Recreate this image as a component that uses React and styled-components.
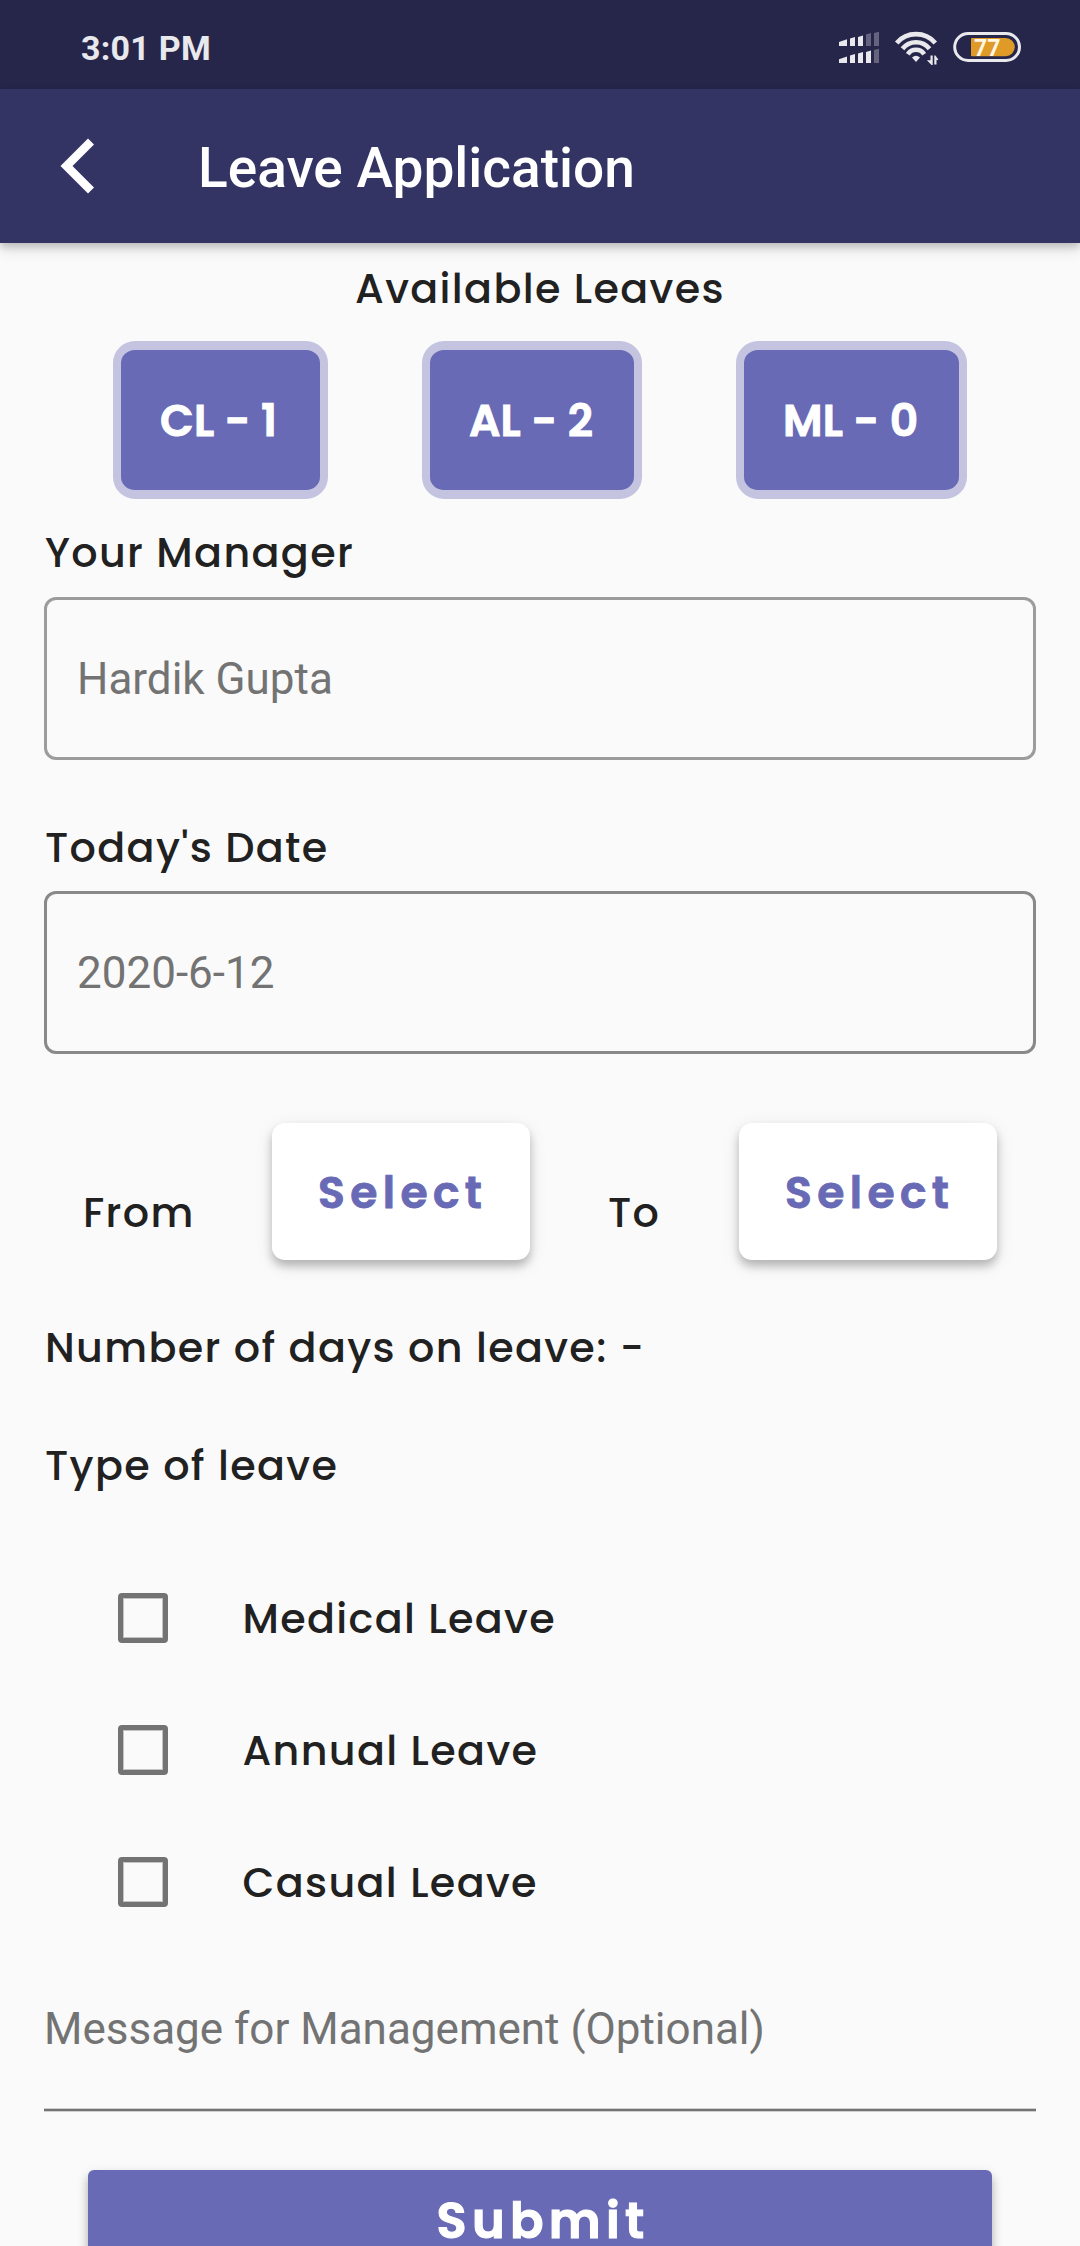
import React, { useState } from "react";
import styled, { createGlobalStyle } from "styled-components";

const GlobalStyle = createGlobalStyle`
  * { box-sizing: border-box; }
  html, body { margin: 0; background: #fafafa; }
`;

const heading = `"Poppins", "Inter", "Open Sans", sans-serif`;
const body = `"Roboto", "Noto Sans", sans-serif`;

const Screen = styled.div`
  width: 1080px;
  height: 2246px;
  overflow: hidden;
  display: flex;
  flex-direction: column;
  background: #fafafa;
  color: #212121;
  font-family: ${body};
`;

const StatusBar = styled.header`
  flex: none;
  height: 89px;
  padding: 7px 59px 0 81px;
  display: flex;
  align-items: center;
  justify-content: space-between;
  background: #26264b;
`;

const Clock = styled.span`
  font-size: 34px;
  font-weight: 700;
  line-height: 40px;
  letter-spacing: 0.25px;
  color: #e9e9ed;
`;

const StatusIcons = styled.svg`
  width: 183px;
  height: 40px;
  display: block;
`;

const AppBar = styled.nav`
  flex: none;
  height: 154px;
  display: flex;
  align-items: center;
  background: #333364;
  box-shadow: 0 3px 8px rgba(0, 0, 0, 0.19), 0 8px 12px rgba(0, 0, 0, 0.1);
  z-index: 1;
`;

const BackButton = styled.button`
  width: 198px;
  height: 154px;
  padding: 0 0 0 60px;
  border: 0;
  background: none;
  display: flex;
  align-items: center;

  svg { display: block; }
`;

const AppTitle = styled.h1`
  margin: 0;
  padding-top: 4px;
  font-size: 55px;
  font-weight: 500;
  line-height: 66px;
  color: #fff;
`;

const Content = styled.main`
  flex: 1;
  min-height: 0;
  padding: 16px 44px 0;
  display: flex;
  flex-direction: column;
`;

const Label = styled.div`
  flex: none;
  font-family: ${heading};
  font-size: 41.25px;
  font-weight: 500;
  line-height: 60px;
  letter-spacing: 1.35px;
  white-space: pre;
`;

const CenterLabel = styled(Label)`
  text-align: center;
`;

const BlockLabel = styled(Label)`
  margin-top: ${(p) => p.$gap}px;
  padding-left: 1px;
`;

const OptionLabel = styled(Label)`
  padding-top: 2px;
`;

const ChipRow = styled.div`
  flex: none;
  margin-top: 22px;
  padding: 0 69px;
  display: flex;
  justify-content: space-between;
`;

const Chip = styled.div`
  width: ${(p) => p.$width}px;
  height: 158px;
  padding-left: 39px;
  display: flex;
  align-items: center;
  border: solid #c4c4e1;
  border-width: 9px 8px;
  border-radius: 22px;
  background: #696ab5;
  color: #fff;
  font-family: ${heading};
  font-size: 44px;
  font-weight: 600;
  letter-spacing: 0.1px;
  -webkit-text-stroke: 0.9px currentColor;
  white-space: pre;
`;

const Field = styled.div`
  flex: none;
  height: 163px;
  margin-top: ${(p) => p.$gap}px;
  padding-left: 30px;
  display: flex;
  align-items: center;
  border: 3px solid ${(p) => p.$line};
  border-radius: 12px;
  color: #737373;
  font-size: 44px;
  line-height: 60px;
`;

const DateRow = styled.div`
  flex: none;
  margin-top: 69px;
  padding: 0 39px;
  display: flex;
  justify-content: space-between;
`;

const DatePicker = styled.div`
  display: flex;
`;

const DateLabel = styled(Label)`
  width: ${(p) => p.$width}px;
  margin-top: 60px;
`;

const SelectButton = styled.button`
  width: 258px;
  height: 137px;
  padding: 2px 0 0 46px;
  border: 0;
  border-radius: 13px;
  background: #fff;
  box-shadow: 0 6px 9px rgba(0, 0, 0, 0.22), 0 5px 18px rgba(0, 0, 0, 0.1);
  color: #696ab5;
  font-family: ${heading};
  font-size: 44px;
  font-weight: 600;
  letter-spacing: 5.4px;
  -webkit-text-stroke: 0.9px currentColor;
  text-align: left;
`;

const Options = styled.div`
  flex: none;
  margin-top: 56px;
`;

const Option = styled.label`
  height: 132px;
  padding-left: 74px;
  display: flex;
  align-items: center;
  gap: 74.5px;
`;

const Checkbox = styled.input.attrs({ type: "checkbox" })`
  appearance: none;
  width: 50px;
  height: 50px;
  margin: 0;
  border: 5px solid #737373;
  box-shadow: inset 0 0 0 1px #c4c4c4;
  border-radius: 4px;

  &:checked { background: #696ab5; border-color: #696ab5; }
`;

const Message = styled.div`
  flex: none;
  height: 163px;
  padding-top: 51px;
  border-bottom: 2px solid #737373;
  box-shadow: 0 1px 0 #cfcfcf, inset 0 -1px 0 #cfcfcf;
  color: #737373;
  font-size: 44px;
  line-height: 60px;
`;

const SubmitButton = styled.button`
  flex: none;
  height: 137px;
  margin: 59px 44px 0;
  padding: 21px 0 0 6px;
  border: 0;
  border-radius: 6px;
  background: #696ab5;
  box-shadow: 0 6px 9px rgba(0, 0, 0, 0.22), 0 5px 14px rgba(0, 0, 0, 0.12);
  color: #fff;
  display: flex;
  justify-content: center;
  align-items: flex-start;
  font-family: ${heading};
  font-size: 49.5px;
  font-weight: 600;
  line-height: 60px;
  letter-spacing: 5.3px;
  -webkit-text-stroke: 1.1px currentColor;
`;

function SystemIcons() {
  return (
    <StatusIcons viewBox="838 28 183 40" fill="#e9e9ed">
      <path d="M839 42l8-2.8V46h-8zM850 38.5l5-1.5v9h-5zM858 37l5-1.5V46h-5z" />
      <path d="M866 34.5l5-1.5v13h-5zM874 33l5-1.2V46h-5z" opacity=".32" />
      <path d="M839 59.3l8-2.8V63h-8zM850 55.5l5-1.5v9h-5zM858 53.5l5-1.5v11h-5zM866 52l5-1.5V63h-5z" />
      <path d="M874 50l5-1.2V63h-5z" opacity=".32" />
      <g fill="none" stroke="#e9e9ed" strokeWidth="4.6">
        <path d="M896.700 43a25.500 25.500 0 0 1 38.600 0" />
        <path d="M902.500 48.800a17.300 17.300 0 0 1 27 0" />
        <path d="M907.800 54.200a9.800 9.800 0 0 1 16.400 0" />
      </g>
      <path d="M912 57.400q4-3.400 8 0l-4 4.600z" />
      <path d="M930.5 55.5h2.2v9.5h-1.200l-4.600-4.800h3.600zM934.300 55.500h1.200l3 4.400h-2v4.600h-2.200z" />
      <rect x="954.7" y="33.5" width="64.8" height="27" rx="13.5" fill="none" stroke="#e9e9ed" strokeWidth="3" />
      <path d="M972 38h33.700a9.100 9.100 0 0 1 0 18.200H972q-1 0-1-1V39q0-1 1-1z" fill="#df9a28" />
      <text x="974" y="55.500" fontFamily="Roboto, sans-serif" fontSize="23" fontWeight="700" fill="#fff6e4">77</text>
    </StatusIcons>
  );
}

const leaves = [
  { text: "CL - 1", width: 215 },
  { text: "AL - 2", width: 220 },
  { text: "ML - 0", width: 231 },
];

const leaveTypes = ["Medical Leave", "Annual Leave", "Casual Leave"];

export default function App() {
  const [checked, setChecked] = useState({});
  const toggle = (name) => setChecked((c) => ({ ...c, [name]: !c[name] }));

  return (
    <Screen>
      <GlobalStyle />
      <StatusBar>
        <Clock>3:01 PM</Clock>
        <SystemIcons />
      </StatusBar>
      <AppBar>
        <BackButton aria-label="Back">
          <svg width="35" height="56" viewBox="0 0 35 56" fill="#fff">
            <path d="M28 0.500L34 6.500L12.500 28L34 49.500L28 55.500L0.500 28z" />
          </svg>
        </BackButton>
        <AppTitle>Leave Application</AppTitle>
      </AppBar>
      <Content>
        <CenterLabel>Available Leaves</CenterLabel>
        <ChipRow>
          {leaves.map((l) => (
            <Chip key={l.text} $width={l.width}>{l.text}</Chip>
          ))}
        </ChipRow>

        <BlockLabel $gap={24}>Your Manager</BlockLabel>
        <Field $gap={14} $line="#9c9c9c">Hardik Gupta</Field>

        <BlockLabel $gap={58}>Today's Date</BlockLabel>
        <Field $gap={13} $line="#898989">2020-6-12</Field>

        <DateRow>
          <DatePicker>
            <DateLabel $width={189}>From</DateLabel>
            <SelectButton>Select</SelectButton>
          </DatePicker>
          <DatePicker>
            <DateLabel $width={131}>To</DateLabel>
            <SelectButton>Select</SelectButton>
          </DatePicker>
        </DateRow>

        <BlockLabel $gap={58}>Number of days on leave: -</BlockLabel>
        <BlockLabel $gap={58}>Type of leave</BlockLabel>

        <Options>
          {leaveTypes.map((name) => (
            <Option key={name}>
              <Checkbox checked={!!checked[name]} onChange={() => toggle(name)} />
              <OptionLabel as="span">{name}</OptionLabel>
            </Option>
          ))}
        </Options>

        <Message>Message for Management (Optional)</Message>
        <SubmitButton>Submit</SubmitButton>
      </Content>
    </Screen>
  );
}
